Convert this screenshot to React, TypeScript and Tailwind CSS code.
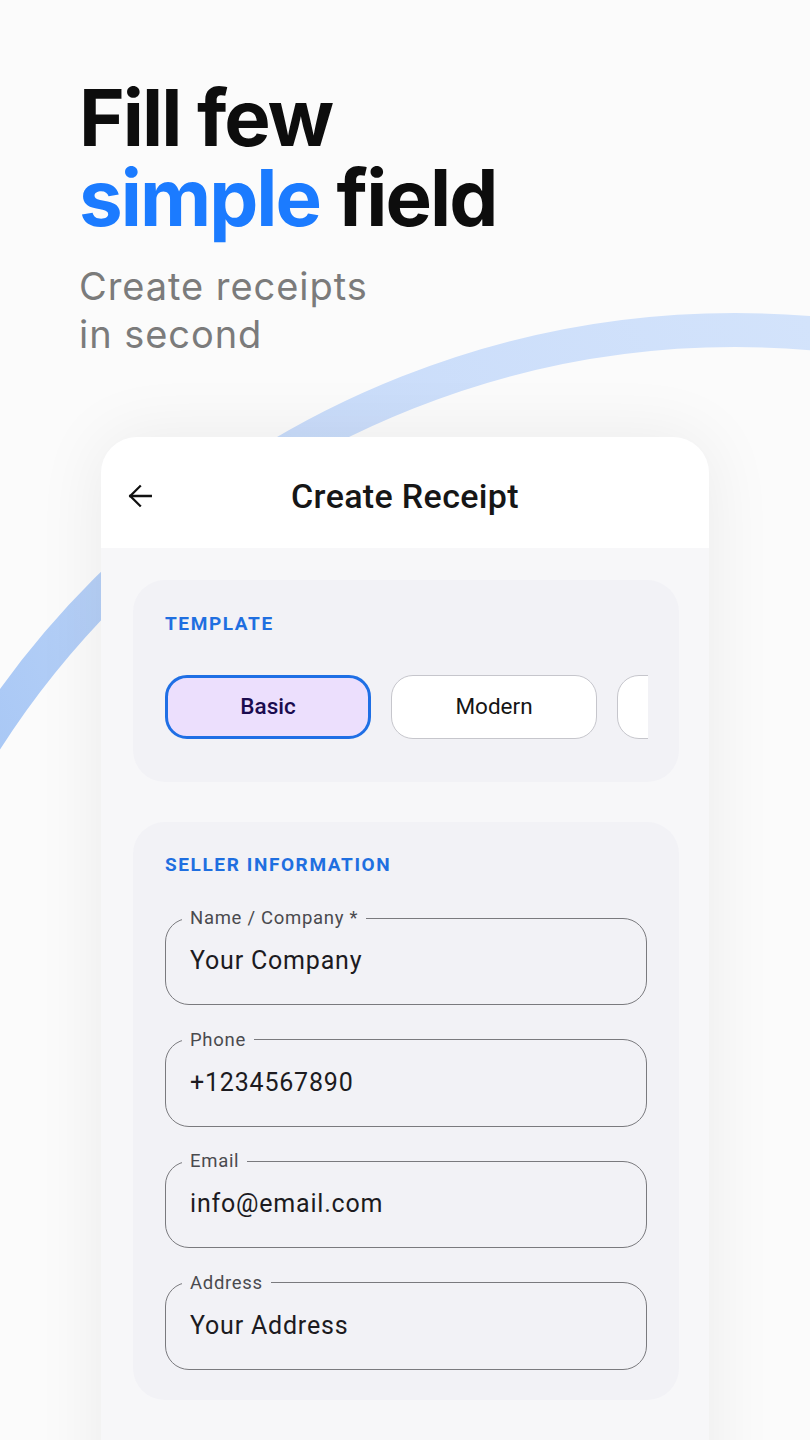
import React from 'react';

const fields = [
  { label: 'Name / Company *', value: 'Your Company' },
  { label: 'Phone', value: '+1234567890' },
  { label: 'Email', value: 'info@email.com' },
  { label: 'Address', value: 'Your Address' },
];

const templates = [
  { name: 'Basic', active: true },
  { name: 'Modern', active: false },
  { name: '', active: false },
];

function BackArrow() {
  return (
    <svg width="26" height="26" viewBox="0 0 24 24" fill="none" stroke="#111" strokeWidth="2.1" strokeLinecap="square">
      <path d="M22 12H3" />
      <path d="M12 3L3 12l9 9" />
    </svg>
  );
}

function Arc() {
  return (
    <svg className="absolute inset-0 pointer-events-none" width="810" height="1440" viewBox="0 0 810 1440">
      <defs>
        <linearGradient id="arcGrad" x1="0" y1="760" x2="810" y2="320" gradientUnits="userSpaceOnUse">
          <stop offset="0" stopColor="#a9c8f5" />
          <stop offset="0.45" stopColor="#c9dcfa" />
          <stop offset="1" stopColor="#d3e3fb" />
        </linearGradient>
      </defs>
      <circle cx="735" cy="1219" r="889" fill="none" stroke="url(#arcGrad)" strokeWidth="34" />
    </svg>
  );
}

function Field({ label, value }: { label: string; value: string }) {
  return (
    <fieldset className="border-[1.5px] border-[#7a7a7e] rounded-[24px] px-[16px]">
      <legend className="px-[8px] text-[18.5px] leading-[22px] text-[#4a4a4e] tracking-[0.7px]">{label}</legend>
      <div className="pl-[8px] mt-[16px] mb-[27px] text-[25px] leading-[32px] text-[#1c1b1f] tracking-[0.8px]">
        {value}
      </div>
    </fieldset>
  );
}

export default function App() {
  return (
    <div className="relative w-[810px] h-[1440px] overflow-hidden bg-[#fbfbfb]">
      <Arc />

      {/* Hero text */}
      <div className="relative pl-[79px] pt-[78px] font-['Inter',sans-serif]">
        <h1 className="text-[78px] leading-[80px] font-bold tracking-[-0.025em] text-[#0d0d0d]">
          Fill few
          <br />
          <span className="text-[#1b7bff]">simple</span> field
        </h1>
        <p className="mt-[24px] text-[38px] leading-[48px] text-[#7b7b7b] tracking-[0.025em]">
          Create receipts
          <br />
          in second
        </p>
      </div>

      {/* Phone card */}
      <div className="relative ml-[101px] mt-[79px] w-[608px] h-[1100px] rounded-[36px] overflow-hidden bg-[#f7f7f9] shadow-[0_0_70px_rgba(0,0,0,0.07)] font-['Roboto',sans-serif]">
        <div className="relative h-[111px] bg-white flex items-center justify-center pt-[7px]">
          <div className="absolute left-[26px] top-[46px]">
            <BackArrow />
          </div>
          <h2 className="text-[34px] font-medium text-[#161616] tracking-[0.01em]">Create Receipt</h2>
        </div>

        <div className="pl-[32px] pr-[30px] pt-[32px] flex flex-col gap-[40px]">
          {/* Template */}
          <div className="rounded-[32px] bg-[#f2f2f6] pl-[32px] pr-[31px] pt-[32px] pb-[43px]">
            <div className="text-[19px] leading-[24px] font-bold tracking-[1.6px] text-[#1f6fe0]">TEMPLATE</div>
            <div className="mt-[39px] flex gap-[20px] overflow-hidden">
              {templates.map((t, i) => (
                <div
                  key={i}
                  className={`shrink-0 w-[206px] h-[64px] rounded-[22px] flex items-center justify-center text-[22.5px] ${
                    t.active
                      ? 'border-[3px] border-[#1f6fe5] bg-[#ecdffd] text-[#1b0b4f] font-medium'
                      : 'border-[1.5px] border-[#c6c6cc] bg-white text-[#151515]'
                  }`}
                >
                  {t.name}
                </div>
              ))}
            </div>
          </div>

          {/* Seller information */}
          <div className="rounded-[32px] bg-[#f2f2f6] px-[32px] pt-[31px] pb-[30px]">
            <div className="text-[19px] leading-[24px] font-bold tracking-[1.6px] text-[#1f6fe0]">SELLER INFORMATION</div>
            <div className="mt-[30px] flex flex-col gap-[23.5px]">
              {fields.map((f) => (
                <Field key={f.label} label={f.label} value={f.value} />
              ))}
            </div>
          </div>
        </div>
      </div>
    </div>
  );
}
